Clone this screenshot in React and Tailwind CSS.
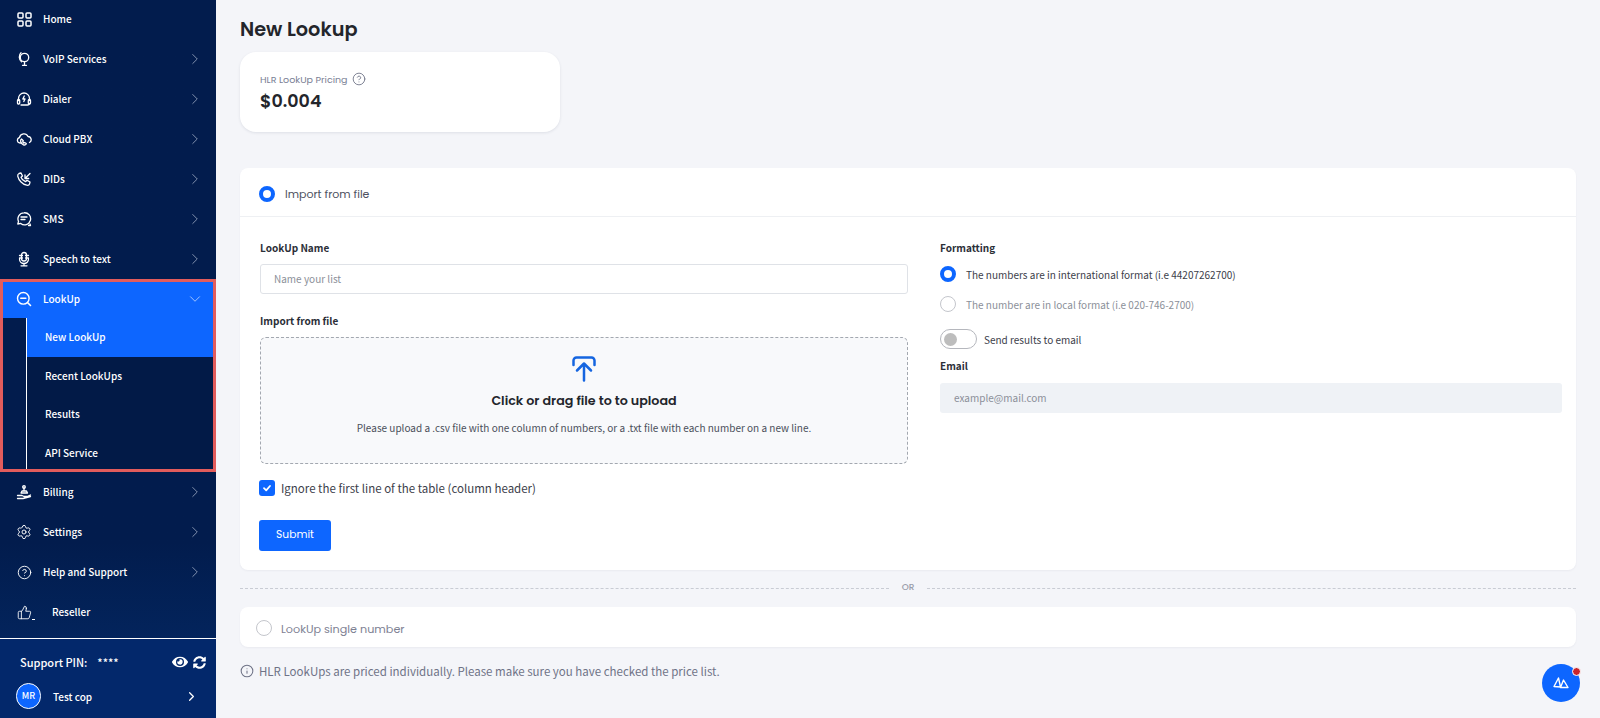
import React from "react";
import { ChevronRight, ChevronDown, ThumbsUp, CircleHelp, Info, Settings } from "lucide-react";
import { FaEye, FaSyncAlt } from "react-icons/fa";

const S = ({ children }) => (
  <svg width="16" height="16" viewBox="0 0 16 16" fill="none" stroke="currentColor" strokeWidth="1.300" strokeLinecap="round" strokeLinejoin="round">{children}</svg>
);
const icons = {
  home: <svg width="15" height="15" viewBox="0 0 15 15" fill="none" stroke="currentColor" strokeWidth="1.500"><rect x="1" y="1" width="5" height="5" rx="1" /><rect x="9" y="1" width="5" height="5" rx="1" /><rect x="1" y="9" width="5" height="5" rx="1" /><rect x="9" y="9" width="5" height="5" rx="1" /></svg>,
  voip: <S><circle cx="8.500" cy="6.500" r="4.200" /><path d="M5 1.800C2.500 4 2.800 8.500 5.500 10.800M8.500 11v2.500M6.500 14.300h4" /></S>,
  dialer: <S><path d="M2.500 9.500V7.500a5.500 5.500 0 0 1 11 0v2M5 14h6.500a2 2 0 0 0 2-1.500" /><rect x="1.500" y="8.500" width="2.200" height="4.500" rx="1.100" /><rect x="12.300" y="8.500" width="2.200" height="4.500" rx="1.100" /><path d="M8.300 5 6.800 8h2.200L7.800 10.500" /></S>,
  cloud: <S><path d="M4.800 12H4a2.800 2.800 0 0 1-.5-5.500 4.500 4.500 0 0 1 8.500-1 3.200 3.200 0 0 1 1.500 6" /><path d="M5.500 8c-1.500.8-1.300 4.200 2 5.800 1.500.6 2.800-.3 2.800-1.300l-1.600-1-1 .6-1-1.300.6-1z" /></S>,
  dids: <S><path d="M3 2.500 5 2l1.500 3-1.500 1.200c.7 2 2.200 3.600 4.500 4.500L11 9.200 14 11l-.5 2c-.3 1-1.500 1.500-2.800 1.200C6.500 13.300 2.800 9.500 1.800 5.300 1.500 4 2 3 3 2.500Z" /><path d="M14 2.500 9 7.500M9 3.800v3.700h3.700" /></S>,
  sms: <S><path d="M8 1.800a6 6 0 0 0-5.500 8.500L1.800 13l3-.6A6 6 0 1 0 8 1.800Z" /><path d="M5 6h6M5 8.500h4M12.500 14.500h2l-.5-1.500" /></S>,
  speech: <S><rect x="5.500" y="1.500" width="5" height="8.500" rx="2.500" /><path d="M3.500 4.500h3M9.500 4.500h3M3.500 7h3M9.500 7h3M3.500 8a4.500 4.500 0 0 0 9 0M8 12.500v2M5 14.800h6" /></S>,
  lookup: <S><circle cx="7.300" cy="7.300" r="5.800" strokeWidth="1.400" /><path d="M4.800 7.300h5M11.500 11.500l3 3" strokeWidth="1.600" /></S>,
  billing: <S><path d="M1.500 11.500H6l2 1h3l3.500-1.500M1.500 14.500H7l7.500-2M5 9h6.500l-1-2h-4.500zM8 6.500V3" /><circle cx="8" cy="3" r="1.300" /></S>,
  settings: <Settings size={16} strokeWidth={1.400} />,
  help: <CircleHelp size={15} strokeWidth={1.500} />,
  reseller: (
    <span className="relative block">
      <ThumbsUp size={15} strokeWidth={1.400} />
      <span className="absolute -right-[3px] bottom-0 h-px w-[3px] bg-white" />
    </span>
  ),
};

const Row = ({ icon, label, chevron = true, indent }) => (
  <div className="flex h-10 items-center pl-4 pr-3 text-white">
    <span className="flex w-4 justify-center text-white">{icons[icon]}</span>
    <span className={`${indent ? "ml-[20px]" : "ml-[11px]"} flex-1 pb-px text-[10px] font-medium`}>{label}</span>
    {chevron && <ChevronRight size={18} strokeWidth={1} className="text-[#aab6cc]" />}
  </div>
);
const Sub = ({ label, active }) => (
  <div className={`flex h-[38.500px] items-center pb-[1px] pl-[18px] text-[10px] font-medium text-white ${active ? "bg-[#0d66ff]" : ""}`}>{label}</div>
);
const Radio = ({ on }) =>
  on ? (
    <span className="block h-4 w-4 shrink-0 rounded-full border-[4.500px] border-[#0d66ff] bg-white" />
  ) : (
    <span className="block h-4 w-4 shrink-0 rounded-full border border-[#c4c6cc] bg-white" />
  );
const poppins = "font-['Poppins','Inter',sans-serif]";

export default function App() {
  return (
    <div className="relative flex h-[718px] w-[1600px] overflow-hidden bg-[#f4f5f9] font-['Noto_Sans_CJK_SC','Noto_Sans',sans-serif] text-[#2b2f38]">
      <aside className="flex w-[216px] shrink-0 flex-col bg-[#021c4d]">
        <nav className="-mt-px flex-1 bg-gradient-to-b from-[#021c4d] from-85% to-[#03245c]">
          <Row icon="home" label="Home" chevron={false} />
          <Row icon="voip" label="VoIP Services" />
          <Row icon="dialer" label="Dialer" />
          <Row icon="cloud" label="Cloud PBX" />
          <Row icon="dids" label="DIDs" />
          <Row icon="sms" label="SMS" />
          <Row icon="speech" label="Speech to text" />
          <div className="relative">
            <div className="flex h-[39px] items-center bg-[#0d66ff] pl-4 pr-3 text-white">
              <span className="flex w-4 justify-center">{icons.lookup}</span>
              <span className="ml-[11px] flex-1 pb-px text-[10px] font-medium">LookUp</span>
              <ChevronDown size={18} strokeWidth={1} className="text-[#cfe0ff]" />
            </div>
            <div className="ml-[26px] border-l border-white bg-[#021a47]">
              <Sub label="New LookUp" active />
              <Sub label="Recent LookUps" />
              <Sub label="Results" />
              <Sub label="API Service" />
            </div>
            <div className="absolute inset-0 border-[3px] border-[#e25c5c]" />
          </div>
          <Row icon="billing" label="Billing" />
          <Row icon="settings" label="Settings" />
          <Row icon="help" label="Help and Support" />
          <Row icon="reseller" label="Reseller" chevron={false} indent />
        </nav>
        <div className="h-[80px] shrink-0 border-t border-white bg-[#03286b] pl-4 pr-[10px] text-white">
          <div className="mt-[13px] flex h-5 items-center pl-1">
            <span className="text-[11px] font-medium">Support PIN:</span>
            <span className="ml-[10px] text-[11px] font-medium">****</span>
            <FaEye size={16} className="ml-auto text-white" />
            <FaSyncAlt size={13} className="ml-[5px] text-white" />
          </div>
          <div className="mt-[11px] flex items-center">
            <span className="flex h-[26px] w-[25px] items-center justify-center rounded-full border border-white bg-[#0d66ff] text-[9px] font-medium">MR</span>
            <span className="ml-[12px] flex-1 text-[10px] font-medium">Test cop</span>
            <ChevronRight size={15} strokeWidth={2} className="mr-[7px]" />
          </div>
        </div>
      </aside>

      <main className="min-w-0 flex-1 pl-6 pr-6">
        <h1 className={`${poppins} mt-[17px] text-[19.300px] leading-[26px] font-semibold text-[#23252b]`}>New Lookup</h1>
        <div className="mt-[9px] h-[80px] w-[320px] rounded-2xl bg-white px-5 pt-[18px] shadow-[0_1px_3px_rgba(30,40,70,0.1)]">
          <div className={`${poppins} flex items-center text-[9.500px] leading-5 text-[#7a7f95]`}>
            HLR LookUp Pricing
            <CircleHelp size={14} strokeWidth={1.500} className="ml-[4px] -mt-[2px] text-[#6f7387]" />
          </div>
          <div className={`${poppins} -mt-px text-[17.500px] leading-6 font-semibold text-[#23252b]`}>$0.004</div>
        </div>

        <section className="mt-[36px] h-[402px] rounded-lg bg-white shadow-[0_1px_2px_rgba(30,40,70,0.05)]">
          <div className="flex h-[49px] items-center border-b border-[#eef0f3] pl-[19px] pt-[3px]">
            <Radio on />
            <span className={`${poppins} ml-[10px] mt-[1px] text-[11px] text-[#4d5160]`}>Import from file</span>
          </div>
          <div className="flex pl-5 pr-[14px]">
            <div className="w-[648px] shrink-0">
              <div className="mt-[23px] text-[10px] leading-4 font-semibold text-[#2b2f38]">LookUp Name</div>
              <div className="mt-[8px] flex h-[30px] items-center rounded-[3px] border border-[#dfe2e7] pb-[2px] pl-[13px] text-[10px] text-[#8b8f99]">Name your list</div>
              <div className="mt-[19px] text-[10px] leading-4 font-semibold text-[#2b2f38]">Import from file</div>
              <div className="mt-[8px] flex h-[127px] flex-col items-center rounded-md border border-dashed border-[#a3a8b0] bg-[#f8f9fb]">
                <svg className="mt-[18px]" width="24" height="26" viewBox="0 0 24 26" fill="none" stroke="#1565e0" strokeWidth="2.500" strokeLinecap="round" strokeLinejoin="round">
                  <path d="M1.500 9V4.500a3 3 0 0 1 3-3h15a3 3 0 0 1 3 3V9" />
                  <path d="M12 24.500V8M5 14.500 12 7.500l7 7" />
                </svg>
                <div className={`${poppins} mt-[9px] text-[12.700px] leading-5 font-semibold text-[#23252b]`}>Click or drag file to to upload</div>
                <div className="mt-[9px] text-[10px] leading-4 text-[#4a4f5a]">Please upload a .csv file with one column of numbers, or a .txt file with each number on a new line.</div>
              </div>
              <div className="mt-[16px] -ml-px flex items-center">
                <span className="flex h-4 w-4 items-center justify-center rounded-[3px] bg-[#0d66ff]">
                  <svg width="10" height="10" viewBox="0 0 10 10" fill="none" stroke="#fff" strokeWidth="1.800" strokeLinecap="round" strokeLinejoin="round"><path d="M2 5.200 4.200 7.300 8 3" /></svg>
                </span>
                <span className="ml-[6px] text-[11.500px] leading-4 text-[#3c404a]">Ignore the first line of the table (column header)</span>
              </div>
              <button className={`${poppins} mt-[24px] -ml-px block h-[31px] w-[72px] rounded-[3px] bg-[#0d66ff] text-[10.700px] text-white`}>Submit</button>
            </div>
            <div className="ml-8 min-w-0 flex-1">
              <div className="mt-[23px] text-[10px] leading-4 font-semibold text-[#2b2f38]">Formatting</div>
              <div className="mt-[10px] flex h-4 items-center">
                <Radio on />
                <span className="ml-[10px] text-[10px] text-[#3c404a]">The numbers are in international format (i.e 44207262700)</span>
              </div>
              <div className="mt-[14px] flex h-4 items-center">
                <Radio />
                <span className="ml-[10px] text-[10px] text-[#8b8f99]">The number are in local format (i.e 020-746-2700)</span>
              </div>
              <div className="mt-[17px] flex items-center">
                <span className="flex h-5 w-[37px] items-center rounded-full border border-[#b5b7bd] bg-white pl-[3px]">
                  <span className="block h-[13px] w-[13px] rounded-full bg-[#bdbdbd]" />
                </span>
                <span className="ml-[7px] text-[10px] text-[#3c404a]">Send results to email</span>
              </div>
              <div className="mt-[9px] text-[10px] leading-4 font-semibold text-[#2b2f38]">Email</div>
              <div className="mt-[9px] flex h-[30px] items-center rounded-[3px] bg-[#eff2f6] pb-[2px] pl-[14px] text-[10px] text-[#8b8f99]">example@mail.com</div>
            </div>
          </div>
        </section>

        <div className="mt-[13px] flex h-[10px] items-center">
          <div className="flex-1 border-t border-dashed border-[#c9ccd4]" />
          <span className={`${poppins} mx-[13px] text-[9px] font-medium text-[#9a9dab]`}>OR</span>
          <div className="flex-1 border-t border-dashed border-[#c9ccd4]" />
        </div>

        <div className="mt-[14px] flex h-10 items-center rounded-lg bg-white pl-4 pt-[2px] shadow-[0_1px_2px_rgba(30,40,70,0.05)]">
          <Radio />
          <span className={`${poppins} ml-[9px] mt-[3px] text-[11.200px] text-[#7e8193]`}>LookUp single number</span>
        </div>

        <div className="mt-[15px] flex items-center text-[11.500px] leading-[18px] text-[#6f7387]">
          <Info size={14} strokeWidth={1.800} />
          <span className="ml-[5px]">HLR LookUps are priced individually. Please make sure you have checked the price list.</span>
        </div>
      </main>

      <div className="absolute left-[1542px] top-[664px] flex h-[38px] w-[38px] items-center justify-center rounded-full bg-[#0d66ff]">
        <svg width="16" height="14" viewBox="0 0 16 14" fill="none" stroke="#fff" strokeWidth="1.400" strokeLinejoin="round"><path d="M5.500 2 1 10.500 7.500 11zM10.500 4 7.500 11.500H15z" /></svg>
        <span className="absolute -right-[1px] top-[3px] h-[9px] w-[9px] rounded-full border border-white bg-[#c9252b]" />
      </div>
    </div>
  );
}
